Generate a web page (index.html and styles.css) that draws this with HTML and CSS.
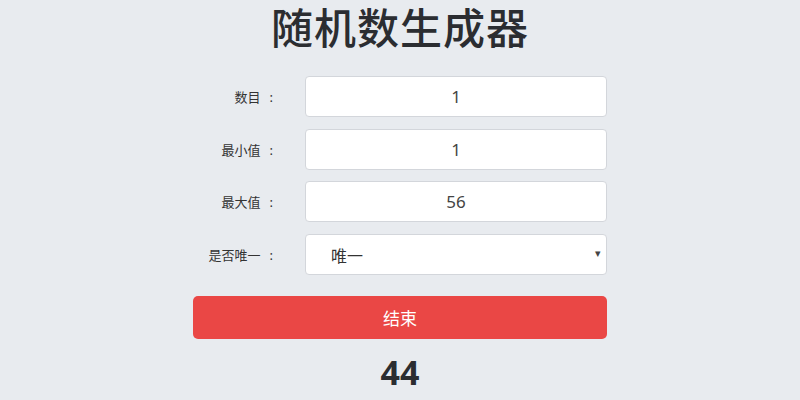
FILE: index.html
```html
<!DOCTYPE html>
<html lang="zh-CN">
<head>
    <meta charset="UTF-8">
    <meta name="viewport" content="width=device-width, initial-scale=1.0">
    <title>随机数生成器</title>
    <link rel="stylesheet" href="styles.css">
</head>
<body>
    <div class="app">
        <h1>随机数生成器</h1>

        <div class="form">
            <div class="row">
                <label for="count">数目<span class="colon">:</span></label>
                <input type="text" id="count" value="1">
            </div>
            <div class="row">
                <label for="min">最小值<span class="colon">:</span></label>
                <input type="text" id="min" value="1">
            </div>
            <div class="row">
                <label for="max">最大值<span class="colon">:</span></label>
                <input type="text" id="max" value="56">
            </div>
            <div class="row">
                <label for="unique">是否唯一<span class="colon">:</span></label>
                <div class="select">
                    <select id="unique">
                        <option>唯一</option>
                        <option>不唯一</option>
                    </select>
                    <span class="arrow">&#9662;</span>
                </div>
            </div>
            <button id="stop">结束</button>
            <div class="result" id="result">44</div>
        </div>
    </div>
</body>
</html>
```

FILE: styles.css
```css
* {
    padding: 0;
    margin: 0;
    box-sizing: border-box;
    font-family: "Noto Sans", "Noto Sans CJK SC", sans-serif;
}

:root {
    --background: #e8ebef;
    --text: #2b2d31;
    --border: #d3d6db;
    --red: #ea4745;
}

body {
    background-color: var(--background);
    color: var(--text);
}

.app {
    width: 414px;
    margin: 0 auto;
    padding-top: 5px;
    display: flex;
    flex-direction: column;
    align-items: center;
}

.app h1 {
    font-family: "Noto Sans CJK SC", sans-serif;
    font-size: 42px;
    font-weight: 500;
    line-height: 42px;
    margin-bottom: 29px;
    letter-spacing: 1px;
}

.form {
    width: 100%;
    display: flex;
    flex-direction: column;
    gap: 11.7px;
}

.row {
    display: flex;
    align-items: center;
}

.row label {
    width: 112px;
    padding-right: 32px;
    text-align: right;
    font-family: "Noto Sans CJK SC", sans-serif;
    font-size: 13px;
    color: #333;
}

.row label .colon {
    margin-left: 9px;
}

.row input,
.row .select {
    flex: 1;
    height: 41px;
}

.row input {
    border: 1px solid var(--border);
    border-radius: 4px;
    background-color: #fff;
    text-align: center;
    font-size: 17px;
    color: #444;
    outline: none;
}

.select {
    position: relative;
}

.select select {
    width: 100%;
    height: 100%;
    appearance: none;
    border: 1px solid var(--border);
    border-radius: 4px;
    background-color: #fff;
    padding-left: 25px;
    font-family: "Noto Sans CJK SC", sans-serif;
    font-size: 16px;
    color: #333;
    outline: none;
}

.select .arrow {
    position: absolute;
    right: 6px;
    top: 11px;
    font-size: 11px;
    color: #444;
    pointer-events: none;
}

#stop {
    margin-top: 9px;
    height: 43px;
    border: none;
    border-radius: 5px;
    background-color: var(--red);
    color: #fff;
    font-family: "Noto Sans CJK SC", sans-serif;
    font-size: 17px;
}

.result {
    text-align: center;
    font-size: 34px;
    font-weight: 700;
    line-height: 34px;
    margin-top: 5px;
}
```
